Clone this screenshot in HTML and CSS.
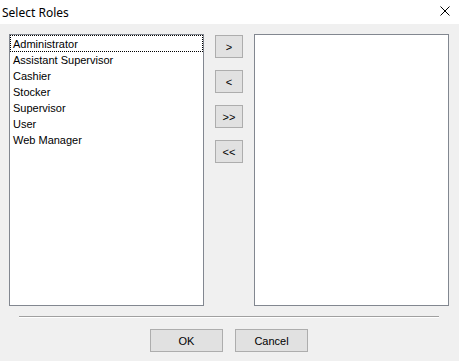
FILE: index.html
```html
<!DOCTYPE html>
<html lang="en">
<head>
    <meta charset="UTF-8">
    <meta name="viewport" content="width=device-width, initial-scale=1.0">
    <title>Select Roles</title>
    <link rel="stylesheet" href="styles.css">
</head>
<body>
    <div class="window">
        <div class="titlebar">
            <span class="title">Select Roles</span>
            <span class="close">
                <svg width="10" height="10" viewBox="0 0 10 10">
                    <path d="M0.5 0.5L9.5 9.5M9.5 0.5L0.5 9.5" stroke="#000" stroke-width="1"/>
                </svg>
            </span>
        </div>

        <div class="content">
            <div class="lists">
                <ul class="listbox">
                    <li class="focused">Administrator</li>
                    <li>Assistant Supervisor</li>
                    <li>Cashier</li>
                    <li>Stocker</li>
                    <li>Supervisor</li>
                    <li>User</li>
                    <li>Web Manager</li>
                </ul>

                <div class="movers">
                    <button class="btn btn-move">&gt;</button>
                    <button class="btn btn-move">&lt;</button>
                    <button class="btn btn-move">&gt;&gt;</button>
                    <button class="btn btn-move">&lt;&lt;</button>
                </div>

                <ul class="listbox"></ul>
            </div>

            <div class="separator"></div>

            <div class="actions">
                <button class="btn btn-action">OK</button>
                <button class="btn btn-action">Cancel</button>
            </div>
        </div>
    </div>
</body>
</html>
```

FILE: styles.css
```css
body {
    margin: 0;
    padding: 0;
    background: #F0F0F0;
    color: #000;
    font-family: 'Liberation Sans', Arial, sans-serif;
    font-size: 11px;
}

.window {
    width: 459px;
    height: 361px;
}

.titlebar {
    height: 24px;
    background: #FFFFFF;
    display: flex;
    align-items: center;
    justify-content: space-between;
    padding: 0 9px 0 2px;
    box-sizing: border-box;
}

.title {
    font-family: 'Noto Sans', sans-serif;
    font-size: 12px;
}

.close {
    display: flex;
    margin-top: -2px;
}

.content {
    padding: 10px 10px 0 9px;
}

.lists {
    display: flex;
    height: 272px;
}

.listbox {
    width: 195px;
    height: 100%;
    margin: 0;
    padding: 0;
    list-style: none;
    background: #FFFFFF;
    border: 1px solid #828790;
    box-sizing: border-box;
}

.listbox li {
    height: 16px;
    line-height: 14px;
    padding: 1px 0 0 2px;
    border: 1px solid transparent;
    box-sizing: border-box;
    white-space: nowrap;
}

.listbox li.focused {
    border: 1px dotted #000;
    height: 17px;
    margin-bottom: -1px;
}

.movers {
    width: 50px;
    display: flex;
    flex-direction: column;
    align-items: center;
    gap: 12px;
    padding-top: 1px;
}

.btn {
    background: #E1E1E1;
    border: 1px solid #ADADAD;
    border-radius: 0;
    padding: 0;
    font-family: 'Liberation Sans', Arial, sans-serif;
    font-size: 11px;
    color: #000;
    box-sizing: border-box;
    height: 23px;
}

.btn-move {
    width: 28px;
}

.separator {
    height: 1px;
    background: #A0A0A0;
    border-bottom: 1px solid #FFFFFF;
    margin: 10px 10px 0 10px;
}

.actions {
    display: flex;
    justify-content: center;
    gap: 12px;
    margin-top: 11px;
}

.btn-action {
    width: 73px;
}
```
